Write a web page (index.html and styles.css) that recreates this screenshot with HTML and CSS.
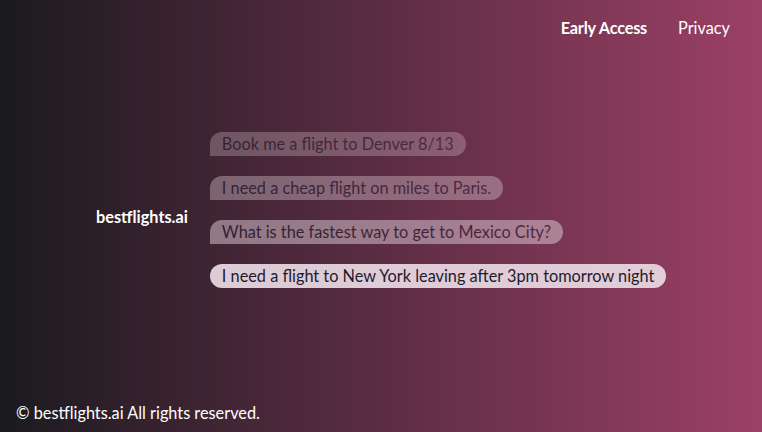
FILE: index.html
```html
<!DOCTYPE html>
<html lang="en">
<head>
<meta charset="utf-8">
<title>bestflights.ai</title>
<link rel="stylesheet" href="styles.css">
</head>
<body>
<div class="page">
  <header class="topbar">
    <nav class="nav">
      <a class="nav-link nav-strong" href="#">Early Access</a>
      <a class="nav-link" href="#">Privacy</a>
    </nav>
  </header>
  <main class="hero">
    <div class="brand">bestflights.ai</div>
    <div class="chat">
      <div class="bubble bubble-1">Book me a flight to Denver 8/13</div>
      <div class="bubble bubble-2">I need a cheap flight on miles to Paris.</div>
      <div class="bubble bubble-3">What is the fastest way to get to Mexico City?</div>
      <div class="bubble bubble-4">I need a flight to New York leaving after 3pm tomorrow night</div>
    </div>
  </main>
  <footer class="footer">© bestflights.ai All rights reserved.</footer>
</div>
</body>
</html>
```
FILE: styles.css
```css
html, body {
  margin: 0;
  padding: 0;
  height: 100%;
}
body {
  font-family: "Lato", "Noto Sans", sans-serif;
  font-size: 16.3px;
  color: #ffffff;
  background: linear-gradient(90deg, #1b1a1f 0%, #9c4066 100%);
}
.page {
  height: 100%;
  display: flex;
  flex-direction: column;
}
.topbar {
  display: flex;
  justify-content: flex-end;
  padding: 17px 32px 0 0;
  height: 23px;
}
.nav {
  display: flex;
  gap: 31px;
}
.nav-link {
  color: #ffffff;
  text-decoration: none;
  line-height: 22px;
}
.nav-strong {
  font-weight: 700;
  letter-spacing: -0.2px;
}
.hero {
  flex: 1;
  display: flex;
  align-items: center;
  padding: 0 0 22px 96px;
  gap: 22px;
}
.brand {
  font-weight: 700;
  margin-top: 12px;
}
.chat {
  display: flex;
  flex-direction: column;
  align-items: flex-start;
  gap: 20px;
}
.bubble {
  height: 24px;
  line-height: 24px;
  padding: 0 12px;
  border-radius: 12px 12px 12px 0;
  background: #e6d5de;
  color: #1a1a2e;
  white-space: nowrap;
}
.bubble-1 { opacity: 0.28; }
.bubble-2 { opacity: 0.36; }
.bubble-3 { opacity: 0.48; }
.bubble-4 {
  opacity: 0.95;
  border-radius: 12px;
}
.footer {
  padding: 0 0 8px 16px;
  line-height: 22px;
}
```
